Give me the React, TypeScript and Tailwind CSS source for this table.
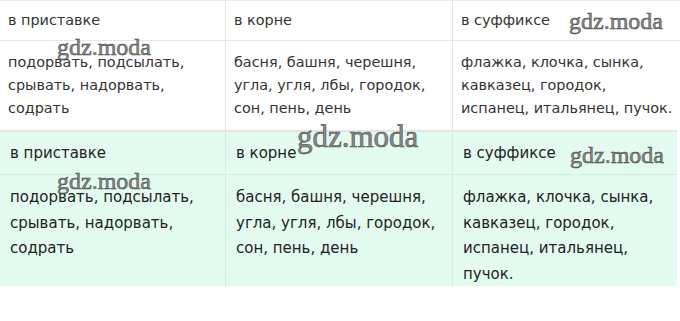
type Col = { head: string; lines: string[]; linesWide: string[] };

const columns: Col[] = [
  {
    head: 'в приставке',
    lines: ['подорвать, подсылать,', 'срывать, надорвать,', 'содрать'],
    linesWide: ['подорвать, подсылать,', 'срывать, надорвать,', 'содрать'],
  },
  {
    head: 'в корне',
    lines: ['басня, башня, черешня,', 'угла, угля, лбы, городок,', 'сон, пень, день'],
    linesWide: ['басня, башня, черешня,', 'угла, угля, лбы, городок,', 'сон, пень, день'],
  },
  {
    head: 'в суффиксе',
    lines: ['флажка, клочка, сынка,', 'кавказец, городок,', 'испанец, итальянец, пучок.'],
    linesWide: ['флажка, клочка, сынка,', 'кавказец, городок,', 'испанец, итальянец,', 'пучок.'],
  },
];

// watermark stamps laid over the tables
const Mark: React.FC<{ className: string }> = ({ className }) => (
  <span
    className={`absolute pointer-events-none whitespace-nowrap font-['Liberation_Serif',serif] text-[#8a8a8a] ${className}`}
    style={{ WebkitTextStroke: '0.5px #3c3c3c' }}
  >
    gdz.moda
  </span>
);

const Table: React.FC<{ variant: 'plain' | 'mint' }> = ({ variant }) => {
  const mint = variant === 'mint';
  const line = mint ? 'border-[#d6eee0]' : 'border-[#e6e6e6]';
  const text = mint
    ? 'px-[10px] text-[15px] text-[#222]'
    : 'px-[8px] text-[14.4px] text-[#333]';
  const cols = 'grid grid-cols-[226px_227px_223px]';
  return (
    <div
      className={
        mint
          ? 'w-[677px] bg-[#e4fcef] border-t-2 border-[#e2e6e4]'
          : 'w-[680px] bg-white border-t border-[#ececec]'
      }
    >
      <div className={`${cols} border-b ${line} ${mint ? 'h-[43px]' : 'h-[40px]'}`}>
        {columns.map((c, i) => (
          <div key={i} className={`${text} ${i < 2 ? `border-r ${line}` : ''} flex items-center`}>
            {c.head}
          </div>
        ))}
      </div>
      <div className={`${cols} ${mint ? 'h-[111px] leading-[25.5px]' : 'h-[89px] leading-[23px]'}`}>
        {columns.map((c, i) => (
          <div key={i} className={`${text} ${i < 2 ? `border-r ${line}` : ''} pt-[10px] whitespace-nowrap`}>
            {(mint ? c.linesWide : c.lines).map((l, j) => (
              <div key={j}>{l}</div>
            ))}
          </div>
        ))}
      </div>
    </div>
  );
};

export default function App() {
  return (
    <div className="relative w-[680px] h-[321px] bg-white font-['DejaVu_Sans',sans-serif] overflow-hidden">
      <Table variant="plain" />
      <Table variant="mint" />
      <Mark className="left-[57px] top-[29px] text-[24px]" />
      <Mark className="left-[569px] top-[3px] text-[24px]" />
      <Mark className="left-[297px] top-[114px] text-[31px]" />
      <Mark className="left-[570px] top-[137px] text-[24px]" />
      <Mark className="left-[57px] top-[163px] text-[24px]" />
    </div>
  );
}
